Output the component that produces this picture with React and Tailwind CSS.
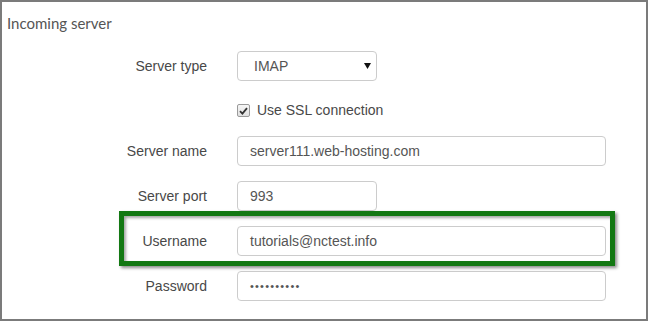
import React from "react";

function Label({ children }) {
  return (
    <div className="w-[205px] shrink-0 text-right text-[#484848] leading-[30px]">{children}</div>
  );
}

function Field({ children, wide = true }) {
  return (
    <div
      className={`ml-[30px] h-[30px] ${wide ? "w-[369px]" : "w-[140px]"} rounded-[4px] border border-[#cccccc] bg-white pl-[12px] flex items-center text-[#555]`}
    >
      {children}
    </div>
  );
}

export default function App() {
  return (
    <div className="w-[648px] h-[321px] border-2 border-[#7b7b7b] bg-white font-['Liberation_Sans',Arial,sans-serif] text-[14px] overflow-hidden">
      <div className="pl-[5px] pt-[12px] text-[15px] leading-[18px] text-[#555] font-['Lato',sans-serif]">
        Incoming server
      </div>
      <div className="mt-[19px] flex flex-col">
        <div className="flex h-[30px]">
          <Label>Server type</Label>
          <div className="ml-[30px] h-[30px] w-[140px] rounded-[4px] border border-[#cccccc] bg-white pl-[16px] pr-[5px] flex items-center justify-between text-[#555]">
            <span>IMAP</span>
            <svg width="7" height="6" viewBox="0 0 7 6">
              <polygon points="0,0 7,0 3.5,6" fill="#111" />
            </svg>
          </div>
        </div>
        <div className="mt-[23px] flex items-center h-[13px]">
          <div className="w-[205px] shrink-0" />
          <div className="ml-[30px] w-[13px] h-[13px] rounded-[2px] border border-[#9a9a9a] bg-gradient-to-b from-[#f6f6f6] to-[#e0e0e0] flex items-center justify-center">
            <svg width="9" height="8" viewBox="0 0 9 8">
              <path d="M1 4.2 L3.4 6.6 L8 1.2" stroke="#333" strokeWidth="1.8" fill="none" />
            </svg>
          </div>
          <span className="ml-[7px] text-[#484848]">Use SSL connection</span>
        </div>
        <div className="mt-[19px] flex h-[30px]">
          <Label>Server name</Label>
          <Field>server111.web-hosting.com</Field>
        </div>
        <div className="mt-[15px] flex h-[30px]">
          <Label>Server port</Label>
          <Field wide={false}>993</Field>
        </div>
        <div className="mt-[15px] flex h-[30px] relative">
          <Label>Username</Label>
          <Field>tutorials@nctest.info</Field>
          <div className="absolute left-[117px] top-[-15px] w-[496px] h-[55px] border-[5px] border-[#137813] shadow-[2px_2px_3px_rgba(0,0,0,0.45),inset_2px_2px_3px_rgba(0,0,0,0.35)] pointer-events-none" />
        </div>
        <div className="mt-[15px] flex h-[30px]">
          <Label>Password</Label>
          <Field>
            <span className="text-[11px] tracking-[1.2px] text-[#555]">••••••••••</span>
          </Field>
        </div>
      </div>
    </div>
  );
}
